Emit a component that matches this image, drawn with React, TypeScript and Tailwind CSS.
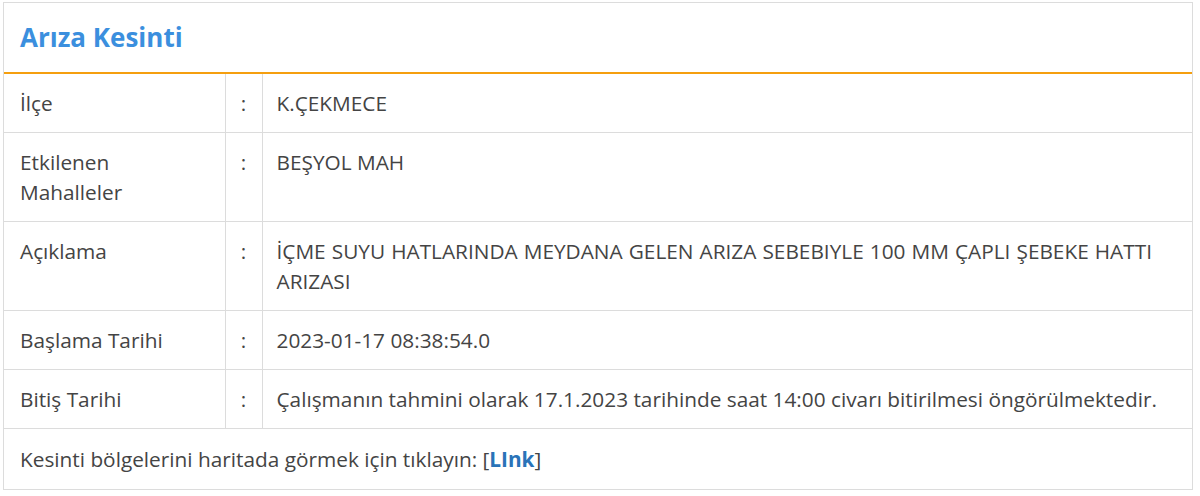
const rows: { label: string; value: string; justify?: boolean }[] = [
  { label: "İlçe", value: "K.ÇEKMECE" },
  { label: "Etkilenen Mahalleler", value: "BEŞYOL MAH" },
  {
    label: "Açıklama",
    value:
      "İÇME SUYU HATLARINDA MEYDANA GELEN ARIZA SEBEBIYLE 100 MM ÇAPLI ŞEBEKE HATTI ARIZASI",
    justify: true,
  },
  { label: "Başlama Tarihi", value: "2023-01-17 08:38:54.0" },
  {
    label: "Bitiş Tarihi",
    value:
      "Çalışmanın tahmini olarak 17.1.2023 tarihinde saat 14:00 civarı bitirilmesi öngörülmektedir.",
  },
]

export default function App() {
  return (
    <div className="bg-white pt-[2px] pl-[3px] font-['Open_Sans',sans-serif] text-[#444]">
      <div className="w-[1190px] border border-[#dcdcdc]">
        <div className="flex h-[71px] items-center border-b-2 border-[#f59f0f] px-4">
          <h2 className="text-[26px] font-bold text-[#3b8fde]">Arıza Kesinti</h2>
        </div>
        <table className="w-full border-collapse text-[20.8px] leading-[30px]">
          <tbody>
            {rows.map((r) => (
              <tr key={r.label} className="border-b border-[#dcdcdc]">
                <td className="w-[221px] border-r border-[#dcdcdc] py-[14px] pr-4 pl-4 align-top">
                  {r.label === "Etkilenen Mahalleler" ? (
                    <>
                      Etkilenen
                      <br />
                      Mahalleler
                    </>
                  ) : (
                    r.label
                  )}
                </td>
                <td className="w-[37px] border-r border-[#dcdcdc] py-[14px] text-center align-top">
                  :
                </td>
                <td
                  className={`py-[14px] pl-[14px] align-top ${
                    r.justify ? "pr-[40px] text-justify" : "pr-[12px]"
                  }`}
                >
                  {r.value}
                </td>
              </tr>
            ))}
            <tr>
              <td colSpan={3} className="py-[15px] px-4">
                Kesinti bölgelerini haritada görmek için tıklayın: [
                <a href="#" className="font-bold text-[#2a73b8]">
                  LInk
                </a>
                ]
              </td>
            </tr>
          </tbody>
        </table>
      </div>
    </div>
  )
}
